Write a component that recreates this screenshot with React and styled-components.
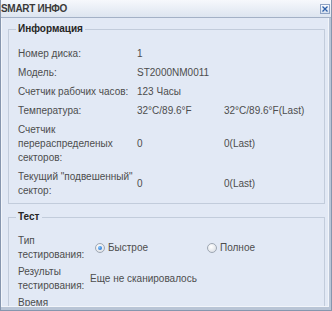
import React from "react";
import styled, { createGlobalStyle } from "styled-components";

const GlobalStyle = createGlobalStyle`
  html, body {
    margin: 0;
    padding: 0;
    background: #dfe6f1;
  }
  body {
    font-family: "Liberation Sans", Arial, sans-serif;
    font-size: 10px;
    color: #4d4d4d;
  }
`;

const Window = styled.div`
  width: 332px;
  height: 311px;
  box-sizing: border-box;
  display: flex;
  flex-direction: column;
  border: 1px solid #8696ae;
  border-top: none;
  background: #b9c5d6;
`;

const TitleBar = styled.div`
  height: 17px;
  flex: none;
  display: flex;
  align-items: center;
  justify-content: space-between;
  padding: 0 1px 0 0;
  background: linear-gradient(#f6f8fc, #dde5f0);
  border-bottom: 1px solid #a3b1c6;
`;

const Title = styled.span`
  font-size: 10px;
  font-weight: bold;
  color: #3a3a3a;
  letter-spacing: -0.3px;
`;

const CloseButton = styled.button`
  width: 10px;
  height: 10px;
  padding: 0;
  margin-top: 1px;
  display: flex;
  align-items: center;
  justify-content: center;
  border: 1px solid #8ea3c4;
  background: linear-gradient(#fbfcfe, #d5e0ef);
  svg {
    display: block;
  }
`;

const Body = styled.div`
  flex: 1;
  min-height: 0;
  overflow: hidden;
  margin: 0 2px 3px 0;
  padding: 4px 3px 0 6px;
  background: #e2e9f5;
  border: 1px solid #f2f5fa;
  border-top: none;
`;

const Group = styled.fieldset`
  margin: ${(p) => (p.$spaced ? "6px" : "0")} 0 0 0;
  padding: ${(p) => p.$top}px 4px 5px 7px;
  border: 1px solid #c2ccdb;
  min-width: 0;
`;

const Legend = styled.legend`
  padding: 0 2px;
  line-height: 14px;
  font-weight: bold;
  color: #262626;
`;

const InfoGrid = styled.div`
  display: grid;
  grid-template-columns: 119px 87px 1fr;
  row-gap: 5px;
  align-items: center;
  padding-left: 2px;
  line-height: 14px;
  white-space: nowrap;
`;

const TestGrid = styled.div`
  display: grid;
  grid-template-columns: 72px 1fr;
  row-gap: 3px;
  align-items: center;
  padding-left: 2px;
  line-height: 14px;
  white-space: nowrap;
`;

const Options = styled.div`
  display: flex;
  padding-left: 5px;
`;

const Option = styled.label`
  display: flex;
  align-items: center;
  gap: 3px;
  width: ${(p) => p.$width || "auto"};
`;

const RadioDot = styled.span`
  width: 8px;
  height: 8px;
  border-radius: 50%;
  border: 1px solid #9ea7b3;
  background: radial-gradient(circle at 40% 35%, #ffffff, #d4d9e0);
  display: flex;
  align-items: center;
  justify-content: center;
  &::after {
    content: "";
    display: ${(p) => (p.$checked ? "block" : "none")};
    width: 4px;
    height: 4px;
    border-radius: 50%;
    background: radial-gradient(circle at 35% 35%, #7fc3ff, #1461c4);
  }
`;

const info = [
  ["Номер диска:", "1", ""],
  ["Модель:", "ST2000NM0011", ""],
  ["Счетчик рабочих часов:", "123 Часы", ""],
  ["Температура:", "32°C/89.6°F", "32°C/89.6°F(Last)"],
  [["Счетчик", "перераспределеных", "секторов:"], "0", "0(Last)"],
  [["Текущий \"подвешенный\"", "сектор:"], "0", "0(Last)"],
];

const Lines = ({ value }) =>
  Array.isArray(value)
    ? value.map((line, i) => (
        <React.Fragment key={i}>
          {i > 0 && <br />}
          {line}
        </React.Fragment>
      ))
    : value;

export default function App() {
  return (
    <>
      <GlobalStyle />
      <Window>
        <TitleBar>
          <Title>SMART ИНФО</Title>
          <CloseButton aria-label="close">
            <svg width="6" height="6" viewBox="0 0 6 6">
              <path d="M0.5 0.5 L5.5 5.5 M5.5 0.5 L0.5 5.5" stroke="#2d5fa8" strokeWidth="1.3" />
            </svg>
          </CloseButton>
        </TitleBar>
        <Body>
          <Group $top={11}>
            <Legend>Информация</Legend>
            <InfoGrid>
              {info.map(([label, value, last], i) => (
                <React.Fragment key={i}>
                  <span>
                    <Lines value={label} />
                  </span>
                  <span>{value}</span>
                  <span>{last}</span>
                </React.Fragment>
              ))}
            </InfoGrid>
          </Group>
          <Group $spaced $top={10}>
            <Legend>Тест</Legend>
            <TestGrid>
              <span>
                Тип
                <br />
                тестирования:
              </span>
              <Options>
                <Option $width="112px">
                  <RadioDot $checked />
                  Быстрое
                </Option>
                <Option>
                  <RadioDot />
                  Полное
                </Option>
              </Options>
              <span>
                Результы
                <br />
                тестирования:
              </span>
              <span>Еще не сканировалось</span>
              <span>
                Время
                <br />
                тестирования:
              </span>
              <span />
            </TestGrid>
          </Group>
        </Body>
      </Window>
    </>
  );
}
